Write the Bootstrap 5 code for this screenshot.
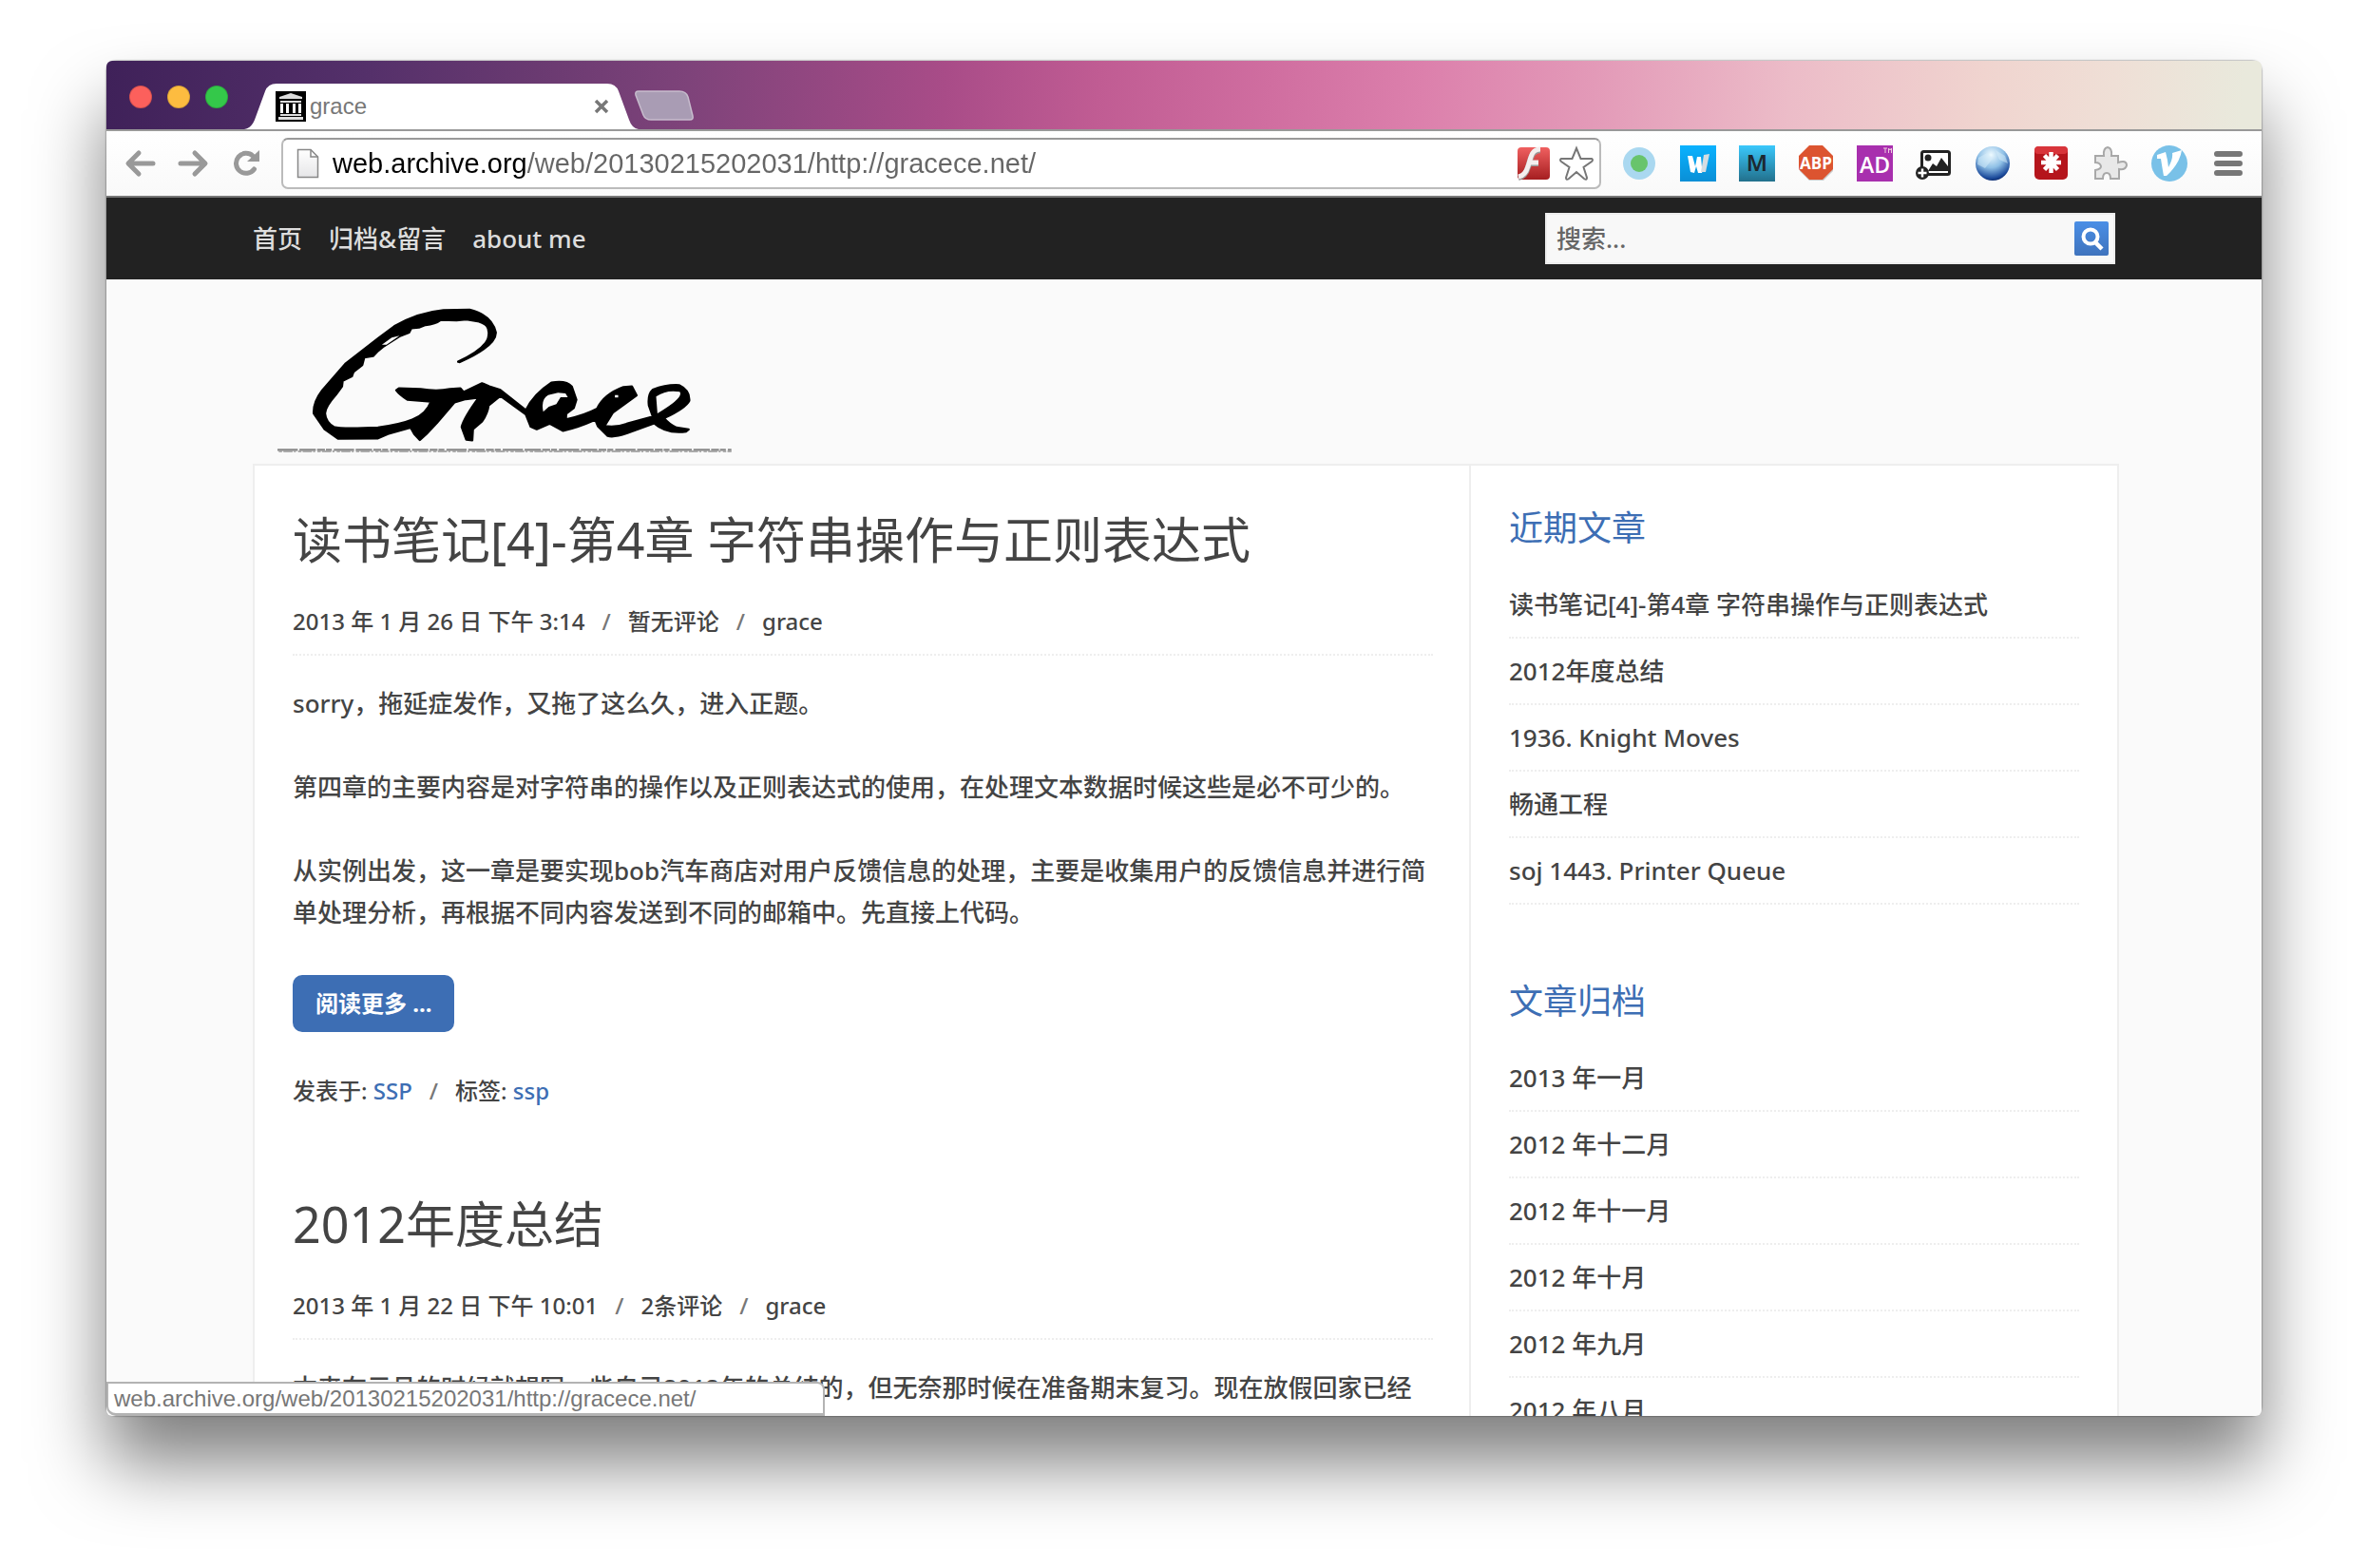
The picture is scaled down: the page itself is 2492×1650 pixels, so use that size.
<!DOCTYPE html>
<html lang="zh-CN">
<head>
<meta charset="utf-8">
<meta name="viewport" content="width=device-width, initial-scale=1">
<title>grace</title>
<link href="https://cdn.jsdelivr.net/npm/bootstrap@5.3.0/dist/css/bootstrap.min.css" rel="stylesheet">
<script src="https://cdn.jsdelivr.net/npm/bootstrap@5.3.0/dist/js/bootstrap.bundle.min.js" defer></script>
<style>
body{background:#fff;color:#444;font-family:"Noto Sans","Noto Sans CJK SC",sans-serif;font-size:26px;font-weight:500;line-height:44px;height:100vh;padding:64px 112px 160px}
a{color:#444;text-decoration:none}
.window{height:100%;border-radius:10px;box-shadow:0 0 2px rgba(0,0,0,.7),0 50px 76px rgba(0,0,0,.5)}
.chrome-font{font-family:"Liberation Sans",Arial,sans-serif;font-weight:400}
.titlebar{height:72px;padding-left:24px;background:linear-gradient(95deg,#3f2159 0%,#54306a 12%,#6a3a71 20%,#7e437a 27%,#a94c88 39%,#c05c93 46%,#d06ea0 54%,#dc80ac 61%,#e39ab8 69%,#ecbcc8 78%,#f0d4cf 87%,#efdfd6 93%,#e9e9dc 99%)}
.lights{height:100%;padding-bottom:-4px}
.light{width:24px;height:24px;border-radius:50%;border:1px solid rgba(0,0,0,.15)}
.browser-tab{width:416px;height:48px;margin-left:17px;padding:8px 32px 8px 33px}
.browser-tab a{color:#777;font-size:24px;line-height:32px}
.tab-shape{inset:0;z-index:0}
.new-tab{margin:0 0 8px -6px}
.toolbar-row{height:72px;padding:0 16px 0 18px;border-top:2px solid #999;border-bottom:2px solid #777;background:linear-gradient(#fff,#f9f9f9)}
.history{gap:20px}
.tool{width:36px;height:38px}
.ext{width:38px;height:38px}
.address{height:54px;margin:0 21px 0 18px;padding:0 6px 0 14px;border:2px solid #bbb;border-top-color:#999;border-radius:7px;background:#fff}
.address input{font-size:29px;line-height:40px;margin-left:14px;background:linear-gradient(90deg,#000 205px,#666 205px);-webkit-background-clip:text;background-clip:text;-webkit-text-fill-color:transparent;outline:0}
.star{margin-left:9px}
.site{background:#fafafa}
.topnav{height:86px;background:#222;padding:0 154px}
.topnav .nav{column-gap:28px}
.topnav .nav-link{color:#ddd;padding:0;line-height:44px}
.search-box{width:600px;height:54px;background:#f8f8f8;border:2px solid #eee;padding:0 4px 0 10px}
.search-box input{outline:0;color:#666;font-weight:500}
.search-box input::placeholder{color:#666;opacity:1}
.search-box button{width:38px;height:38px}
.masthead{padding:0 154px}
.sheet{margin:0 150px 0 154px;background:#fff;border:2px solid #eee}
.posts{padding:48px 38px 0 40px}
.sidebar{width:682px;border-left:2px solid #eee;padding:44px 40px 0}
.posts h2{font-size:52px;line-height:60px;font-weight:400;margin:0 0 38px}
.meta{font-size:24px;line-height:36px}
.meta i{font-style:normal;color:#777;margin:0 18px}
.post-meta{padding-bottom:16px;border-bottom:2px dotted #eee;margin-bottom:28px}
.posts p{margin:0 0 44px}
.more{background:#3d6eb4;color:#fff;font-size:24px;font-weight:700;line-height:36px;padding:12px 24px;border:0;border-radius:10px}
.post-foot{margin:44px 0 92px}
.blue{color:#3d6eb4}
.sidebar h3{font-size:36px;line-height:44px;font-weight:400;margin:0 0 24px;color:#3d6eb4}
.sidebar ul{margin:0 0 80px}
.sidebar li{padding:12px 0;border-bottom:2px dotted #eee}
.status{left:0;bottom:0;width:756px;height:36px;padding:0 6px;font-size:24px;line-height:32px;color:#777;background:#fff;border:2px solid #b3b3b3;border-width:2px 2px 3px;border-radius:0 8px 0 10px}
</style>
</head>
<body>
<div class="window position-relative d-flex flex-column">
  <header class="chrome-font rounded-top overflow-hidden flex-shrink-0">
    <div class="titlebar d-flex align-items-end">
      <div class="lights d-flex gap-3 align-items-center pt-1">
        <span class="light" style="background:#fc605c"></span><span class="light" style="background:#fdbc40"></span><span class="light" style="background:#34c84a"></span>
      </div>
      <div class="browser-tab position-relative d-flex align-items-center">
        <svg class="tab-shape position-absolute w-100 h-100" viewBox="0 0 416 48" preserveAspectRatio="none"><path d="M0 48C6 47 9 43 11 38L22 8Q25 0 34 0H382Q391 0 394 8L405 38Q408 47 415 48Z" fill="#fff"/></svg>
        <svg class="position-relative flex-shrink-0" width="32" height="32" viewBox="0 0 32 32"><path d="M0 0h32v32H0z"/><path d="M4 6L16 2l12 4v2H4zM5 10h22v2H5zM5 24h22v2H5zM3 27h26v3H3z" fill="#ddd"/><path d="M6.500 13v10M12.500 13v10M19.500 13v10M25.500 13v10" stroke="#fff" stroke-width="3"/></svg>
        <a href="#" class="position-relative flex-grow-1 ps-1">grace</a>
        <button class="btn p-0 border-0 d-flex position-relative" aria-label="关闭"><svg width="16" height="16" viewBox="0 0 16 16"><path d="M2 2l12 12M14 2L2 14" stroke="#777" stroke-width="3.500"/></svg></button>
      </div>
      <button class="new-tab btn p-0 border-0 d-flex" aria-label="新标签页"><svg width="64" height="34" viewBox="0 0 64 34"><path d="M5 2H48Q55 2 57 8L62 28Q63 32 59 32H18Q12 32 10 27L2 6Q1 2 5 2Z" fill="#a99cb4" stroke="#c7bccd" stroke-width="1.500"/></svg></button>
    </div>
    <div class="toolbar-row d-flex align-items-center">
      <div class="history d-flex">
        <button class="tool btn p-0 border-0 d-flex align-items-center" aria-label="后退"><svg width="36" height="30" viewBox="0 0 36 30" fill="none" stroke="#999" stroke-width="5" stroke-linecap="round" stroke-linejoin="round"><path d="M31 15H6M16 4L5 15l11 11"/></svg></button>
        <button class="tool btn p-0 border-0 d-flex align-items-center" aria-label="前进"><svg width="36" height="30" viewBox="0 0 36 30" fill="none" stroke="#999" stroke-width="5" stroke-linecap="round" stroke-linejoin="round"><path d="M4 15H29M19 4L30 15 19 26"/></svg></button>
        <button class="tool btn p-0 border-0 d-flex align-items-center" aria-label="重新加载"><svg width="36" height="30" viewBox="0 0 36 30"><path d="M25.500 21A10.500 10.500 0 1 1 24 7" fill="none" stroke="#999" stroke-width="5" stroke-linecap="round"/><path d="M31 1V13H18Z" fill="#999"/></svg></button>
      </div>
      <div class="address d-flex align-items-center flex-grow-1">
        <svg width="24" height="32" viewBox="0 0 24 32"><defs><linearGradient id="pg" x2="0" y2="1"><stop stop-color="#fff"/><stop offset="1" stop-color="#e6e6e8"/></linearGradient></defs><path d="M1.500 1.500H15L22.500 9V30.500H1.500Z" fill="url(#pg)" stroke="#888" stroke-width="1.500"/><path d="M15 1.500V9H22.500" fill="none" stroke="#888" stroke-width="1.500"/></svg>
        <label for="url" class="visually-hidden">地址</label>
        <input id="url" type="text" class="border-0 flex-grow-1 p-0" value="web.archive.org/web/20130215202031/http://gracece.net/">
        <svg width="36" height="38" viewBox="0 0 36 38"><defs><linearGradient id="fl" x2="0" y2="1"><stop stop-color="#f06060"/><stop offset="1" stop-color="#a51e20"/></linearGradient></defs><rect x="1" y="2" width="34" height="34" rx="4" fill="url(#fl)"/><path d="M25 4C15 4 15 14 12 22C10 29 7 32 2 33M13 18H23" fill="none" stroke="#999" stroke-width="6" transform="translate(0 1)"/><path d="M25 4C15 4 15 14 12 22C10 29 7 32 2 33M13 18H23" fill="none" stroke="#f4eeee" stroke-width="5"/></svg>
        <button class="star btn p-0 border-0 d-flex" aria-label="收藏"><svg width="36" height="38" viewBox="0 0 36 38"><path d="M18 3L22.500 14H34Q36 15 34 17L25.500 23L29 34Q29 37 26 35L18 28L10 35Q7 37 7 34L10.500 23L2 17Q0 15 2 14H13.500Z" fill="#fff" stroke="#777" stroke-width="2"/></svg></button>
      </div>
      <div class="d-flex gap-4">
        <button class="ext btn p-0 border-0 d-flex" aria-label="状态"><svg width="38" height="38"><circle cx="19" cy="19" r="17" fill="#aad8f0"/><circle cx="19" cy="19" r="9" fill="#68c46c"/></svg></button>
        <button class="ext btn p-0 border-0 d-flex" aria-label="W"><svg width="38" height="38"><defs><linearGradient id="wb" x2="0" y2="1"><stop stop-color="#0ab2ff"/><stop offset="1" stop-color="#0a8fd6"/></linearGradient></defs><path d="M0 0h38v38H0z" fill="url(#wb)"/><path d="M8 11l5 0 3 11 2-10h4l1 11 2 0-2 6h-4l-2-7-2 7-4-1z" fill="#fff"/><path d="M25 10l6-1-4 19h-5z" fill="#d5dde2"/></svg></button>
        <button class="ext btn p-0 border-0 d-flex" aria-label="M"><svg width="38" height="38"><defs><linearGradient id="mb" x2="0" y2="1"><stop stop-color="#3ac8fc"/><stop offset="1" stop-color="#22708c"/></linearGradient></defs><path d="M0 0h38v38H0z" fill="url(#mb)"/><text x="19" y="27" text-anchor="middle" font-family="Noto Sans" font-weight="600" font-size="24" fill="#1c2830">M</text></svg></button>
        <button class="ext btn p-0 border-0 d-flex" aria-label="ABP"><svg width="38" height="38"><path d="M12 3H27L37 13V27L27 37H12L2 27V13Z" fill="#ccc"/><path d="M12 0H26L37 11V25L26 36H12L1 25V11Z" fill="#dc5430"/><text x="19" y="25" text-anchor="middle" font-family="Open Sans" font-weight="700" font-size="17" fill="#fff">ABP</text></svg></button>
        <button class="ext btn p-0 border-0 d-flex" aria-label="AD"><svg width="38" height="38"><path d="M0 0h38v38H0z" fill="#a82fae"/><text x="19" y="29" text-anchor="middle" font-family="Open Sans" font-weight="600" font-size="23" fill="#fff">AD</text><path d="M28 3h4M30 3v5M33.500 8V3l1.500 2 1.500-2v5" stroke="#ecd" fill="none"/></svg></button>
        <button class="ext btn p-0 border-0 d-flex" aria-label="图片"><svg width="38" height="38"><rect x="6.500" y="6.500" width="29" height="24" rx="2" fill="#fff" stroke="#222" stroke-width="3"/><circle cx="13" cy="13" r="3.500" fill="#222"/><path d="M13 27l5-8 4 3 5-9 7 9v5z" fill="#222"/><circle cx="7" cy="29" r="7" fill="#222"/><path d="M7 24.500v9M2.500 29h9" stroke="#fff" stroke-width="2.500"/></svg></button>
        <button class="ext btn p-0 border-0 d-flex" aria-label="地球"><svg width="38" height="38"><defs><radialGradient id="gl" cx=".45" cy=".25" r=".75"><stop stop-color="#eefaff"/><stop offset=".5" stop-color="#8fc0e6"/><stop offset=".9" stop-color="#1d4c9c"/><stop offset="1" stop-color="#0d2f75"/></radialGradient></defs><circle cx="19" cy="19" r="18" fill="url(#gl)"/><path d="M4 13l9-5 6 6-8 10-8-4M22 5l10 6 3 8-9-4z" fill="#d8eefa" opacity=".5"/></svg></button>
        <button class="ext btn p-0 border-0 d-flex" aria-label="密码"><svg width="38" height="38"><rect x="1" y="1" width="35" height="35" rx="5" fill="#b5151c"/><rect x="1" y="1" width="35" height="8" rx="4" fill="#d8343a"/><path d="M18.500 7v22M8 18h21M11.500 10.500l14 15M25.500 10.500l-14 15" stroke="#fff" stroke-width="4.500"/></svg></button>
        <button class="ext btn p-0 border-0 d-flex" aria-label="扩展"><svg width="38" height="38"><path d="M3 11H12Q11 3 16 2Q21 3 20 11H27V18Q36 15 36 21Q35 26 28 25V35H19Q19 29 15 29Q11 29 11 35H3V26Q9 25 9 22Q8 18 3 18Z" fill="#e8e8e8" stroke="#a8a8a8" stroke-width="2"/></svg></button>
        <button class="ext btn p-0 border-0 d-flex" aria-label="V"><svg width="38" height="38"><circle cx="19" cy="19" r="19" fill="#79c1e8"/><path d="M6 10L15 7Q17 14 18 23Q23 14 22 8L32 5Q30 19 16 32H13Q11 21 10 14L6 14Z" fill="#fff"/></svg></button>
        <button class="ext btn p-0 border-0 d-flex" aria-label="菜单"><svg width="38" height="38"><path d="M7 9H31M7 19H31M7 29H31" stroke="#777" stroke-width="6" stroke-linecap="round"/></svg></button>
      </div>
    </div>
  </header>

  <div class="site flex-grow-1 overflow-hidden rounded-bottom">
    <nav class="topnav d-flex align-items-center justify-content-between">
      <div class="nav">
        <a class="nav-link" href="#">首页</a><a class="nav-link" href="#">归档&amp;留言</a><a class="nav-link" href="#">about me</a>
      </div>
      <form class="search-box d-flex align-items-center" role="search">
        <label for="q" class="visually-hidden">搜索</label>
        <input id="q" type="text" class="border-0 bg-transparent flex-grow-1 p-0" placeholder="搜索...">
        <button type="button" class="btn p-0 border-0 d-flex" aria-label="搜索"><svg width="38" height="38"><defs><linearGradient id="sb" x2="0" y2="1"><stop stop-color="#4a8fe6"/><stop offset="1" stop-color="#3f73bd"/></linearGradient></defs><rect x="1" y="1" width="36" height="36" rx="2" fill="url(#sb)"/><circle cx="18" cy="17" r="7.500" fill="none" stroke="#fff" stroke-width="4"/><path d="M23 23l7 7" stroke="#fff" stroke-width="4.500"/></svg></button>
      </form>
    </nav>
    <div class="masthead">
      <a href="#" class="d-block" aria-label="Grace">
        <svg class="d-block" width="520" height="194" viewBox="6 -6 520 194">
          <g transform="scale(.3444 .3333)">
            <path stroke="#000" stroke-width="7" stroke-linejoin="round" d="M645 242C684 223 735 195 738 160C742 130 730 122 705 114L670 108 640 111 592 110Q575 124 545 126L525 134 502 136 495 150 465 162 415 195 400 208 385 224 358 228 352 252 325 274 320 288 292 302 290 320 272 345Q238 385 238 405Q240 432 265 448Q285 455 400 450Q470 440 505 425Q548 408 562 368L490 362Q465 345 456 332L464 326 530 328Q580 337 620 328L652 326 662 338 718 310 740 320 772 330 852 395Q875 345 930 308Q975 300 992 320L1006 362 998 388 975 406 974 424Q1030 412 1070 390Q1090 345 1150 322L1176 320 1190 348 1118 402 1092 445Q1130 450 1160 438L1240 415 1228 380Q1224 345 1240 330Q1280 314 1320 316Q1353 332 1351 365Q1340 388 1274 420Q1290 440 1312 450L1349 456 1342 462Q1280 470 1244 436L1160 468Q1120 482 1102 476L1072 445 1064 425Q1010 450 965 460L925 437 885 455 867 447 852 408 774 350 738 380Q735 405 718 430L690 455 688 490 670 488 656 448Q662 420 708 355L668 360 634 370 580 435 548 470 528 489 511 470 500 450 430 470 400 484 278 485 237 455 204 405Q202 370 230 332L302 247 402 167 450 130Q520 87 600 79L680 78Q748 95 760 150Q760 193 650 243Z"/>
            <path fill="#fafafa" d="M905 400Q897 360 920 347L950 340 973 342 980 354 958 354 945 376 922 384ZM1250 352Q1280 330 1322 337 1336 355 1254 405ZM412 188l30-22 24-6-40 28ZM1124 347h10v8h-10z"/>
            <path stroke="#888" stroke-width="7" stroke-dasharray="62 5 50 4 24 3 18 6" d="M93 520H1480"/>
            <path stroke="#aaa" stroke-width="6" stroke-dasharray="10 4 28 4 6 7" d="M97 525H1480"/>
          </g>
        </svg>
      </a>
    </div>
    <div class="sheet d-flex">
      <main class="posts flex-grow-1">
        <article>
          <h2><a href="#">读书笔记[4]-第4章 字符串操作与正则表达式</a></h2>
          <div class="meta post-meta">2013 年 1 月 26 日 下午 3:14<i>/</i><a href="#">暂无评论</a><i>/</i><a href="#">grace</a></div>
          <p>sorry，拖延症发作，又拖了这么久，进入正题。</p>
          <p>第四章的主要内容是对字符串的操作以及正则表达式的使用，在处理文本数据时候这些是必不可少的。</p>
          <p>从实例出发，这一章是要实现bob汽车商店对用户反馈信息的处理，主要是收集用户的反馈信息并进行简单处理分析，再根据不同内容发送到不同的邮箱中。先直接上代码。</p>
          <a class="btn more d-inline-block align-top" href="#">阅读更多 ...</a>
          <div class="meta post-foot">发表于: <a class="blue" href="#">SSP</a><i>/</i>标签: <a class="blue" href="#">ssp</a></div>
        </article>
        <article>
          <h2><a href="#">2012年度总结</a></h2>
          <div class="meta post-meta">2013 年 1 月 22 日 下午 10:01<i>/</i><a href="#">2条评论</a><i>/</i><a href="#">grace</a></div>
          <p>本来在元旦的时候就想写一些自己2012年的总结的，但无奈那时候在准备期末复习。现在放假回家已经</p>
        </article>
      </main>
      <aside class="sidebar flex-shrink-0">
        <h3>近期文章</h3>
        <ul class="list-unstyled">
          <li><a href="#">读书笔记[4]-第4章 字符串操作与正则表达式</a></li>
          <li><a href="#">2012年度总结</a></li>
          <li><a href="#">1936. Knight Moves</a></li>
          <li><a href="#">畅通工程</a></li>
          <li><a href="#">soj 1443. Printer Queue</a></li>
        </ul>
        <h3>文章归档</h3>
        <ul class="list-unstyled">
          <li><a href="#">2013 年一月</a></li>
          <li><a href="#">2012 年十二月</a></li>
          <li><a href="#">2012 年十一月</a></li>
          <li><a href="#">2012 年十月</a></li>
          <li><a href="#">2012 年九月</a></li>
          <li><a href="#">2012 年八月</a></li>
        </ul>
      </aside>
    </div>
  </div>
  <div class="status chrome-font position-absolute">web.archive.org/web/20130215202031/http://gracece.net/</div>
</div>
</body>
</html>
